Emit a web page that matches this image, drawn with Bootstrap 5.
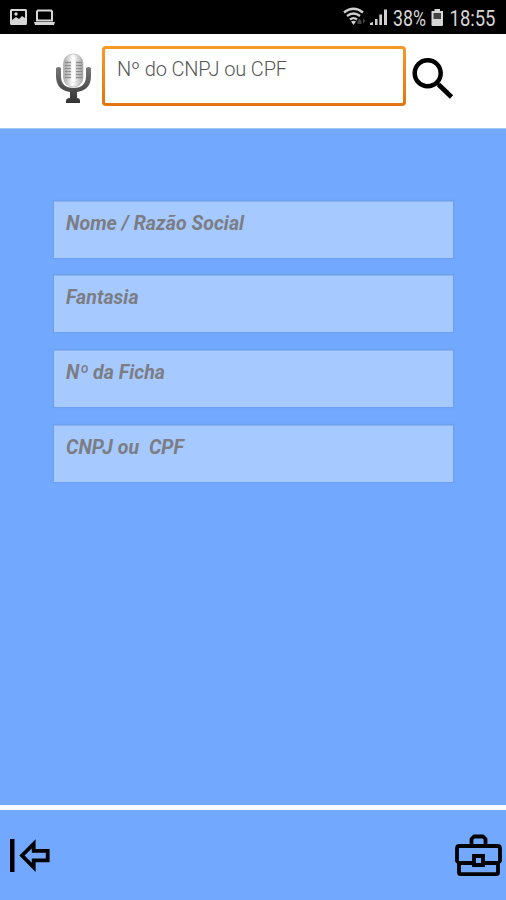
<!DOCTYPE html>
<html lang="pt-BR">
<head>
<meta charset="utf-8">
<meta name="viewport" content="width=device-width, initial-scale=1">
<title>Consulta</title>
<link href="https://cdn.jsdelivr.net/npm/bootstrap@5.3.0/dist/css/bootstrap.min.css" rel="stylesheet">
<style>
  body { font-family: Roboto, "Liberation Sans", sans-serif; background: #72a9ff; }
  svg { display: block; flex: none; overflow: visible; }
  .statusbar { height: 34px; background: #000; padding: 2px 6px 0 9px; }
  .statusbar text { font-family: Roboto, "Liberation Sans", sans-serif; font-size: 21.5px; fill: #d6d6d6; }
  .searchbar { height: 95px; padding: 12px 51px 0 54px; border-bottom: 1px solid #a5c6f8; }
  .search-field { width: 304px; height: 60px; margin-left: 9px; border: 3px solid transparent; border-radius: 4px;
    background: linear-gradient(#fff, #fff) padding-box, linear-gradient(#f79a26, #e27410) border-box;
    padding: 8px 12px; font-size: 20px; line-height: 25px; font-weight: 300; color: #555; letter-spacing: -.14px; }
  .fields { padding: 71.500px 53px 0 54px; gap: 17.700px; }
  .entry { height: 57px; background: #a6c9ff; border-top: 1px solid #8db3eb; box-shadow: 0 0 1px 1px #6ca0f1;
    padding: 10px 12px; font-size: 19.5px; line-height: 24px; font-weight: 700; font-style: italic; color: #7b7d83; letter-spacing: .06px; white-space: pre; }
  .bottombar { height: 95px; border-top: 5px solid #fff; padding: 0 3px 0 9px; }
</style>
<script src="https://cdn.jsdelivr.net/npm/bootstrap@5.3.0/dist/js/bootstrap.bundle.min.js"></script>
</head>
<body>
<div class="d-flex flex-column vh-100">
  <header class="statusbar d-flex align-items-center justify-content-between">
    <svg width="50" height="32" viewBox="9 2 50 32">
      <path fill="#d6d6d6" fill-rule="evenodd" d="M11.500 9h14q1.500 0 1.500 1.500v13q0 1.500-1.500 1.500h-14q-1.500 0-1.500-1.500v-13q0-1.500 1.500-1.500zM12 11v9l4-3 3 2 3-3 3 2v-7z"/>
      <circle cx="16" cy="14" r="1.700" fill="#d6d6d6"/>
      <path fill="none" stroke="#d6d6d6" stroke-width="2" d="M37 20.500V11.500l1-1h13l1 1v9z"/>
      <path fill="#d6d6d6" d="M34 22h21l-1 3H35z"/>
    </svg>
    <svg width="158" height="32" viewBox="342 2 158 32">
      <g fill="none" stroke="#d0d0d0" stroke-width="2.300">
        <path d="M344 12.500q9.500-7.500 19 0M347 16q6.500-5 13 0M350 19.500q3.500-2.800 7 0"/>
      </g>
      <path fill="#d0d0d0" d="M351 21.500q2.500-1.500 5 0L353.500 25z"/>
      <path fill="#444" d="M357.500 21l2-2.500 2 2.500v3h-4zM363 18l2.500 3-2.500 2.500z"/>
      <path fill="#d0d0d0" d="M370 25v-2l3-1v3zM375 25v-6h2.500v6zM379.300 25V14.500h2.700V25zM384 25V9.500h3V25z"/>
      <text x="393" y="25.500" textLength="33" lengthAdjust="spacingAndGlyphs">38%</text>
      <path fill="#d6d6d6" d="M434.500 9h5.500v2h3v14q0 1-1 1h-9.500q-1 0-1-1V11h3z"/>
      <path fill="#444" d="M433.500 13h7.500v6h-7.500z"/>
      <text x="449.500" y="25.500" textLength="46" lengthAdjust="spacingAndGlyphs">18:55</text>
    </svg>
  </header>

  <div class="searchbar bg-white d-flex align-items-start">
    <svg class="mt-1" width="39" height="56" viewBox="54 50 39 56">
      <defs>
        <linearGradient id="capsule"><stop offset="0" stop-color="#aaa"/><stop offset=".48" stop-color="#fff"/><stop offset="1" stop-color="#aaa"/></linearGradient>
        <linearGradient id="stand" x2="0" y2="1"><stop offset="0" stop-color="#777"/><stop offset="1" stop-color="#333"/></linearGradient>
      </defs>
      <path fill="url(#stand)" d="M56 68.500q0-1.500 2.500-1.500t2.500 1.500V76q0 12 12.500 12T86 76v-7.500q0-1.500 2.500-1.500t2.500 1.500V76q0 14-14 16v6q3 .2 3 3v2H66v-2q0-2.800 4-3v-6Q56 90 56 76z"/>
      <rect x="63.500" y="54" width="19.500" height="33" rx="9.500" fill="url(#capsule)" stroke="#aaa" stroke-width=".7"/>
      <path stroke="#777" stroke-width="1.300" d="M65 62.500h6M65 65.500h6M65 68.500h6M65 71.500h6M65 74.500h6M65 77.500h6M76 62.500h6M76 65.500h6M76 68.500h6M76 71.500h6M76 74.500h6M76 77.500h6" opacity=".75"/>
      <path stroke="#fff" stroke-width="3" d="M73.500 58v24"/>
    </svg>
    <label class="search-field">Nº do CNPJ ou CPF</label>
    <svg class="ms-auto" width="46" height="56" viewBox="409 46 46 56">
      <circle cx="427.700" cy="73.200" r="13" fill="none" stroke="#000" stroke-width="4.500"/>
      <path stroke="#000" stroke-width="4.800" d="M438.500 84.500L451.500 97"/>
      <path stroke="#000" stroke-width="2.500" d="M436 82l4 4"/>
    </svg>
  </div>

  <main class="fields flex-grow-1 d-flex flex-column">
    <label class="entry">Nome / Razão Social</label>
    <label class="entry">Fantasia</label>
    <label class="entry">Nº da Ficha</label>
    <label class="entry">CNPJ ou  CPF</label>
  </main>

  <footer class="bottombar d-flex align-items-center justify-content-between">
    <svg width="44" height="44" viewBox="9 833 44 44">
      <path fill="#000" d="M10 839h4.500v33H10z"/>
      <path fill="none" stroke="#000" stroke-width="3.800" d="M22 855.500l11.700-11.700v7h14v9.500h-14v7z"/>
    </svg>
    <svg width="48" height="44" viewBox="455 833 48 44">
      <g fill="none" stroke="#000" stroke-width="3.800" stroke-linejoin="round">
        <path d="M471.500 845v-6l2.500-2.500h9l2.500 2.500v6"/>
        <path d="M459.500 846h38q2.500 0 2.500 2.500V861l-2 2H485M473 863h-14l-2-2v-12.500q0-2.500 2.500-2.500"/>
        <path d="M459 863v9.500q0 1.700 1.700 1.700h35.600q1.700 0 1.700-1.700V863"/>
        <path stroke-linejoin="miter" d="M474 856h9v9h-9z"/>
      </g>
    </svg>
  </footer>
</div>
</body>
</html>
